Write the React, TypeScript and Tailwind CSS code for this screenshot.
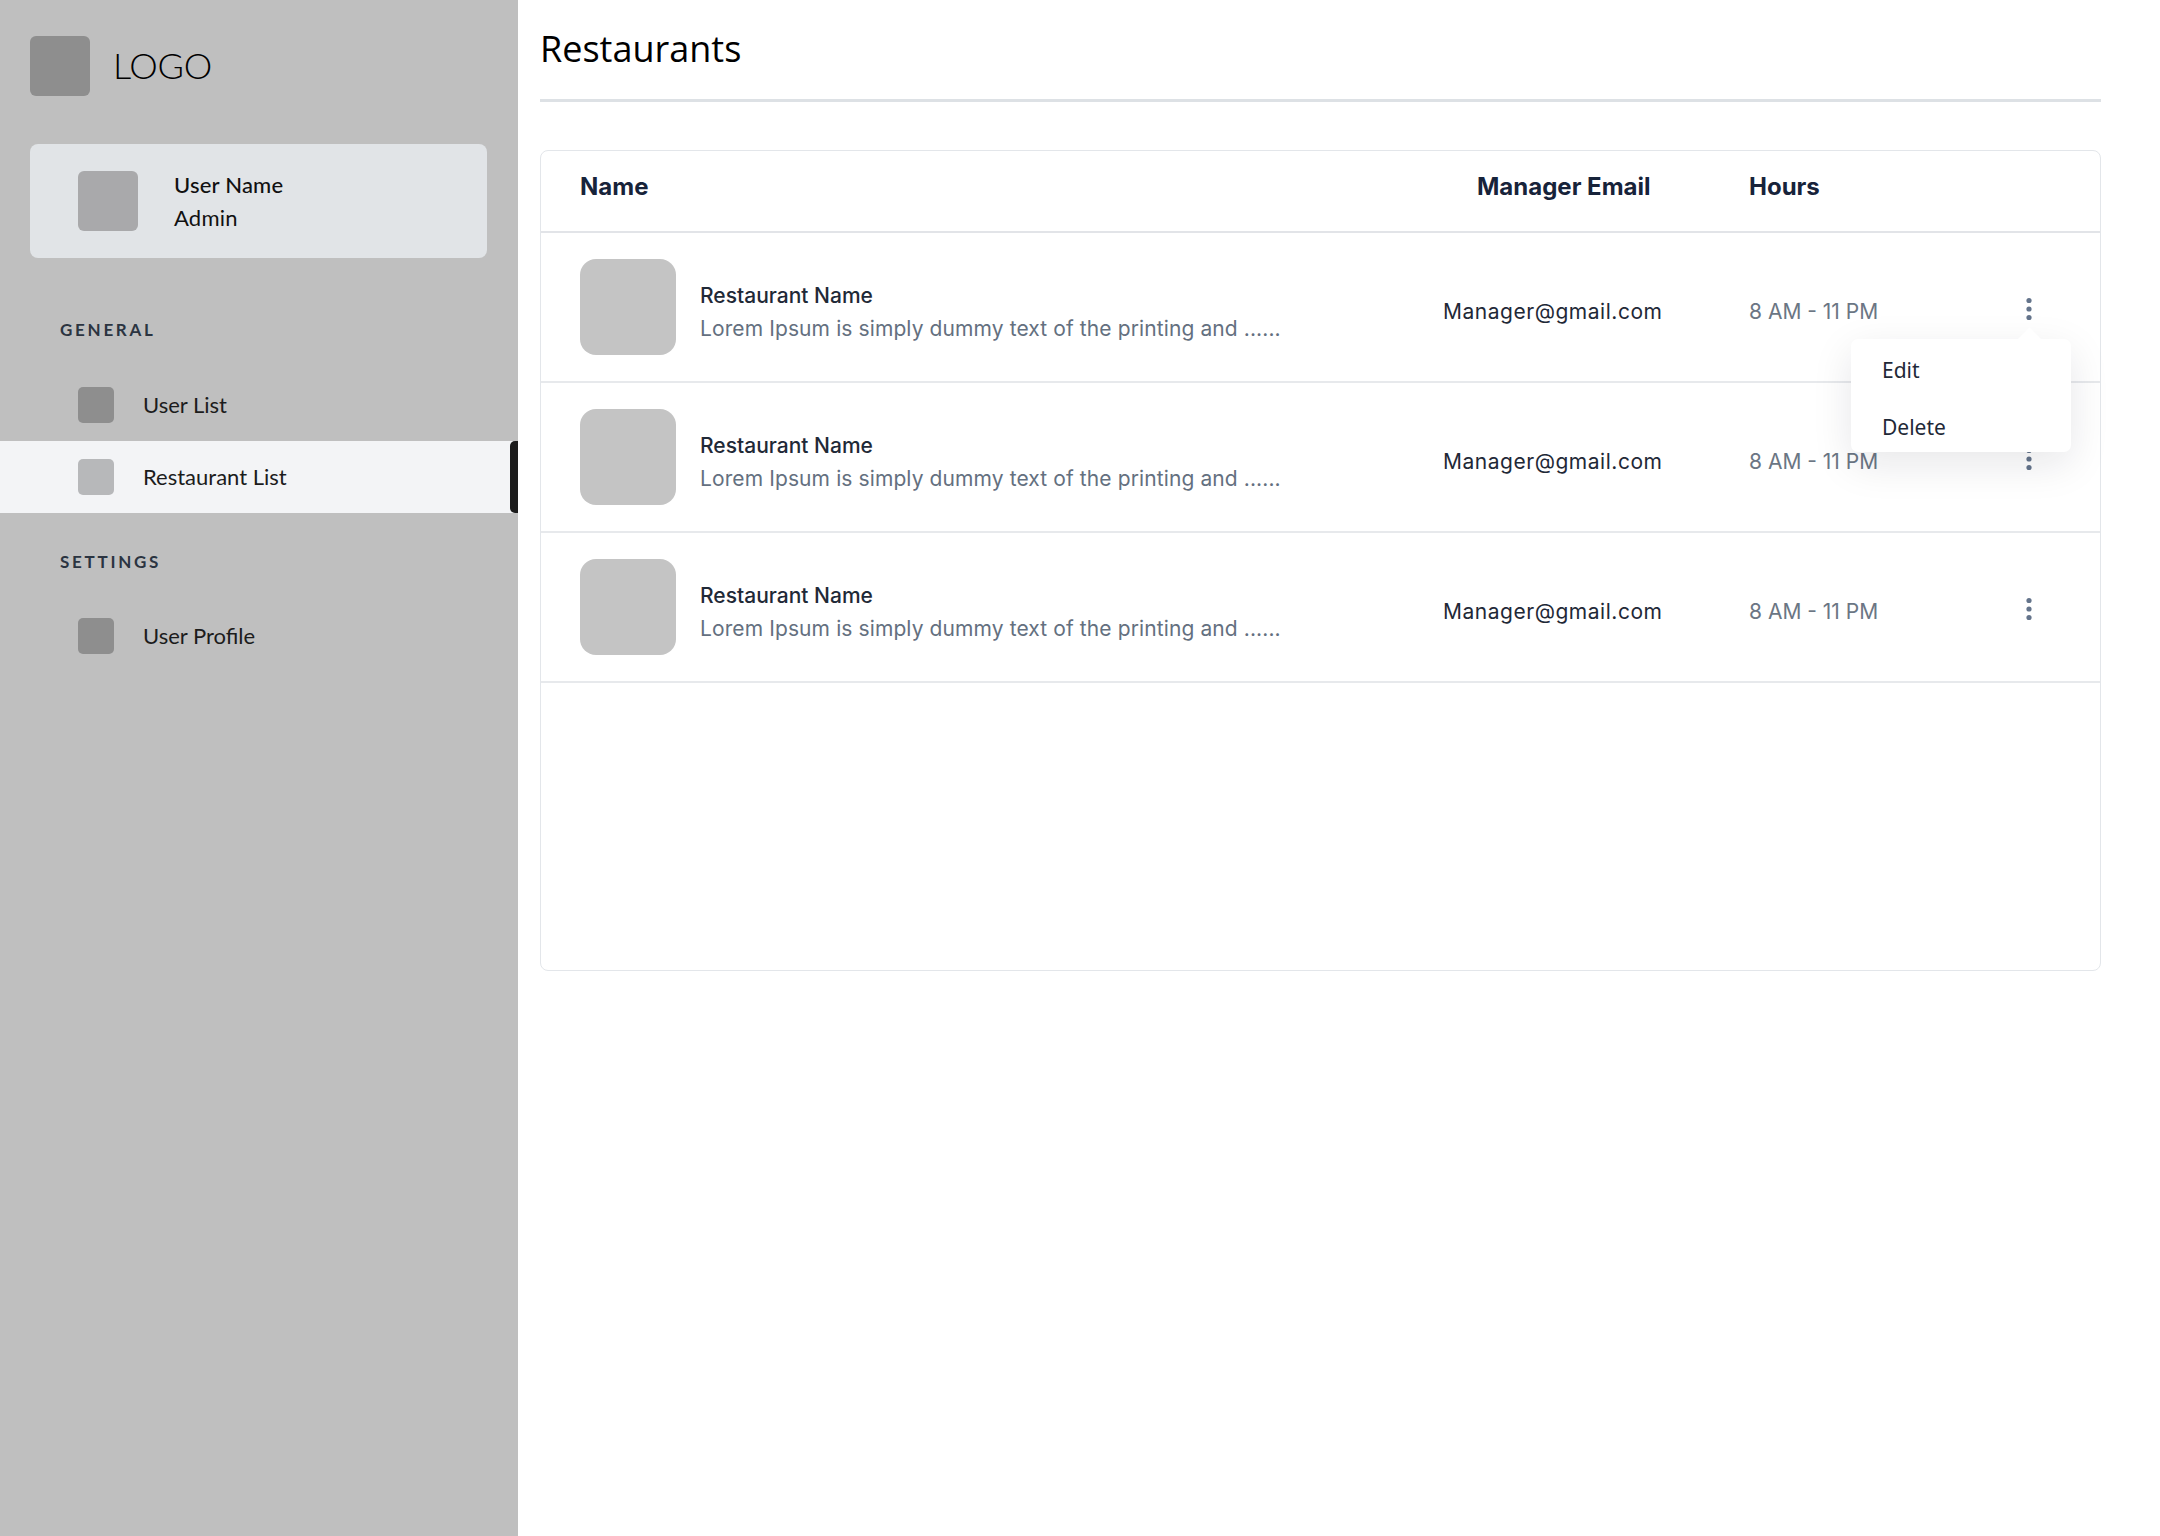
import * as React from "react";

const rows = [1, 2, 3];

function Kebab() {
  return (
    <svg width="8" height="24" viewBox="0 0 8 24" className="block">
      <circle cx="4" cy="3.5" r="2.6" fill="#64748b" />
      <circle cx="4" cy="12" r="2.6" fill="#64748b" />
      <circle cx="4" cy="20.5" r="2.6" fill="#64748b" />
    </svg>
  );
}

function NavItem({ label, active }: { label: string; active?: boolean }) {
  return (
    <div
      className={
        "relative flex h-[72px] items-center pl-[78px] " + (active ? "bg-[#f3f4f6]" : "")
      }
    >
      <div
        className={
          "h-9 w-9 rounded-[5px] " + (active ? "bg-[#b7b8ba]" : "bg-[#8e8e8e]")
        }
      />
      <span className="-mt-[1px] ml-[29px] text-[22px] text-[#1c1c1c]">{label}</span>
      {active && (
        <div className="absolute right-0 top-0 h-full w-[8px] rounded-l-[5px] bg-[#1c1c1c]" />
      )}
    </div>
  );
}

function Sidebar() {
  return (
    <aside className="flex w-[518px] shrink-0 flex-col bg-[#bfbfbf] pt-9 font-['Lato',sans-serif]">
      <div className="flex items-center pl-[30px]">
        <div className="h-[60px] w-[60px] rounded-[6px] bg-[#8e8e8e]" />
        <span className="-mt-[2px] ml-[23px] text-[36px] font-light tracking-[-0.3px] text-black">
          LOGO
        </span>
      </div>

      <div className="ml-[30px] mt-12 flex h-[114px] w-[457px] items-center rounded-[8px] bg-[#e1e4e7] pl-12">
        <div className="h-[60px] w-[60px] rounded-[6px] bg-[#a9a9ab]" />
        <div className="ml-9 text-[22px] leading-[33px] tracking-[0.01em] text-[#111]">
          <div className="font-medium">User Name</div>
          <div>Admin</div>
        </div>
      </div>

      <div className="mt-[60px] pl-[60px] text-[17px] font-bold leading-6 tracking-[0.16em] text-[#2b3441]">
        GENERAL
      </div>
      <div className="mt-[27px]">
        <NavItem label="User List" />
        <NavItem label="Restaurant List" active />
      </div>

      <div className="mt-[37px] pl-[60px] text-[17px] font-bold leading-6 tracking-[0.16em] text-[#2b3441]">
        SETTINGS
      </div>
      <div className="mt-[26px]">
        <NavItem label="User Profile" />
      </div>
    </aside>
  );
}

function ActionMenu() {
  return (
    <div className="absolute left-[-174px] top-[42px] z-10 h-[113px] w-[220px] rounded-[7px] bg-white shadow-[0_12px_40px_rgba(15,23,42,0.10)]">
      <div className="absolute left-[170px] top-[-8px] h-[17px] w-[17px] rotate-45 bg-white" />
      <div className="relative flex h-full flex-col justify-center pl-[31px] pt-[6px] font-['Noto_Sans',sans-serif] text-[21px] text-[#1f2937]">
        <div className="leading-[57px]">Edit</div>
        <div className="leading-[57px]">Delete</div>
      </div>
    </div>
  );
}

function Row({ first }: { first?: boolean }) {
  return (
    <div className="grid h-[150px] grid-cols-[863px_306px_252px_56px] items-center border-b-2 border-[#e7e9ec] pl-[39px] pr-[43px] text-[21px]">
      <div className="flex items-center">
        <div className="h-24 w-24 rounded-[16px] bg-[#c4c4c4]" />
        <div className="ml-6 pt-[10px] leading-[33px]">
          <div className="font-medium text-[#1f2937]">Restaurant Name</div>
          <div className="tracking-[0.005em] text-[#64707f]">
            Lorem Ipsum is simply dummy text of the printing and ......
          </div>
        </div>
      </div>
      <div className="pt-[10px] tracking-[0.025em] text-[#1f2937]">Manager@gmail.com</div>
      <div className="pt-[10px] text-[#6b7684]">8 AM - 11 PM</div>
      <div className="flex justify-center pt-[4px]">
        <div className="relative">
          <Kebab />
          {first && <ActionMenu />}
        </div>
      </div>
    </div>
  );
}

export default function App() {
  return (
    <div className="flex min-h-[1536px] w-full bg-white">
      <Sidebar />
      <main className="flex-1 pl-[22px] pr-[61px] pt-[28px] font-['Inter',sans-serif]">
        <h1 className="font-['Open_Sans',sans-serif] text-[36px] leading-[42px] text-black">
          Restaurants
        </h1>
        <div className="mt-[29px] h-[3px] w-full bg-[#dde1e5]" />

        <div className="mt-12 h-[821px] rounded-[8px] border border-[#e3e6ea] bg-white">
          <div className="grid h-[82px] grid-cols-[863px_306px_252px_56px] items-center border-b-2 border-[#e2e4e8] pb-[8px] pl-[39px] pr-[43px] text-[24px] font-bold text-[#17233a]">
            <div>Name</div>
            <div className="pl-[34px]">Manager Email</div>
            <div>Hours</div>
            <div />
          </div>
          {rows.map((r) => (
            <Row key={r} first={r === 1} />
          ))}
        </div>
      </main>
    </div>
  );
}
